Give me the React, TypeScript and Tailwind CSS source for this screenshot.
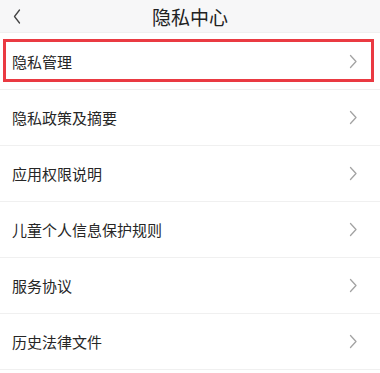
import React from "react";

const items = ["隐私管理", "隐私政策及摘要", "应用权限说明", "儿童个人信息保护规则", "服务协议", "历史法律文件"];

function Chevron() {
  return (
    <svg width="9" height="15" viewBox="0 0 9 15" fill="none">
      <path d="M1.5 1.5 L7 7.5 L1.5 13.5" stroke="#a3a3a3" strokeWidth="1.3" strokeLinecap="round" strokeLinejoin="round" />
    </svg>
  );
}

export default function App() {
  return (
    <div
      className="w-[380px] h-[373px] bg-white overflow-hidden"
      style={{ fontFamily: '"Noto Sans CJK SC", "Noto Sans", sans-serif' }}
    >
      <div className="relative h-[33px] bg-[#f7f7f8] border-b border-[#f0f0f0] flex items-center justify-center">
        <svg className="absolute left-[13px] top-[9px]" width="8" height="15" viewBox="0 0 8 15" fill="none">
          <path d="M6.5 1 L1.5 7.5 L6.5 14" stroke="#444" strokeWidth="1.3" strokeLinecap="round" strokeLinejoin="round" />
        </svg>
        <span className="text-[19px] leading-none text-[#222]">隐私中心</span>
      </div>
      {items.map((t, i) => (
        <div
          key={t}
          className={`relative flex items-center justify-between pl-[12px] pr-[22px] ${i === 0 ? "h-[56px]" : "h-[56px] border-t border-[#f0f0f0]"}`}
        >
          <span className="text-[15px] text-[#262626] leading-none">{t}</span>
          <Chevron />
          {i === 0 && (
            <div className="absolute left-[3px] right-[6px] top-[6px] h-[43px] border-[3px] border-[#ea3a42] pointer-events-none" />
          )}
        </div>
      ))}
      <div className="border-t border-[#f0f0f0]" />
    </div>
  );
}
